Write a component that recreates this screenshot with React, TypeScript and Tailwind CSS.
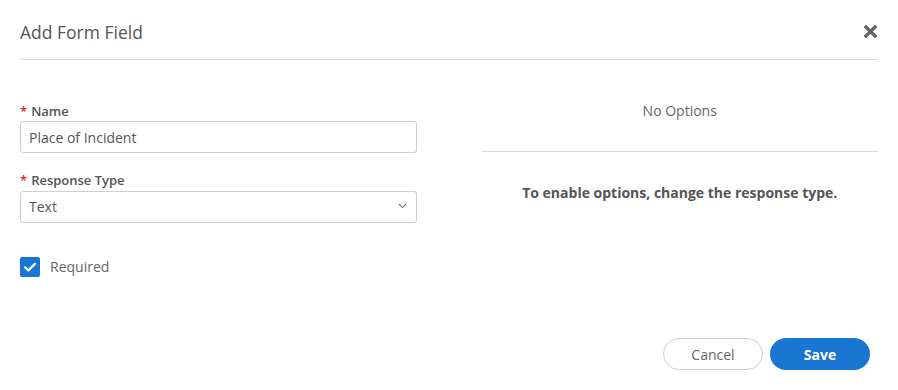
const CloseIcon = () => (
  <svg width="13" height="13" viewBox="0 0 13 13" aria-hidden="true">
    <path d="M2 2 L11 11 M11 2 L2 11" stroke="#666666" strokeWidth="3.4" strokeLinecap="square" fill="none" />
  </svg>
);

const Chevron = () => (
  <svg width="9" height="6" viewBox="0 0 9 6" aria-hidden="true">
    <path d="M0.8 1 L4.5 4.6 L8.2 1" stroke="#777777" strokeWidth="1.1" fill="none" />
  </svg>
);

const Check = () => (
  <svg width="20" height="20" viewBox="0 0 20 20" aria-hidden="true">
    <path d="M5 10.2 L8.4 13.4 L15 6.8" stroke="#ffffff" strokeWidth="2.2" fill="none" strokeLinecap="round" strokeLinejoin="round" />
  </svg>
);

const Label = ({ children }: { children: string }) => (
  <label className="block text-[13px] leading-[18px] font-semibold text-[#555]">
    <span className="text-[#e02424] mr-[4px]">*</span>
    {children}
  </label>
);

const App = () => {
  return (
    <div
      className="w-[898px] h-[390px] bg-white rounded-[3px] flex flex-col"
      style={{ fontFamily: '"Open Sans", "Liberation Sans", sans-serif' }}
    >
      {/* header */}
      <div className="mx-5 pt-5 pb-[15px] border-b border-[#d9d9d9] flex items-center justify-between">
        <h2 className="text-[17.5px] leading-6 text-[#555]">Add Form Field</h2>
        <button className="mr-[1px] mt-[-2px]">
          <CloseIcon />
        </button>
      </div>

      {/* body */}
      <div className="mx-5 pt-[42px] grid grid-cols-2 gap-[65px]">
        <div className="flex flex-col">
          <Label>Name</Label>
          <input
            readOnly
            value="Place of Incident"
            className="mt-px h-8 w-full border border-[#cfcfcf] rounded-[3px] px-2 text-[14px] text-[#555] outline-none"
          />
          <div className="mt-[18px]">
            <Label>Response Type</Label>
          </div>
          <div className="mt-[2px] h-8 w-full border border-[#cfcfcf] rounded-[3px] pl-2 pr-[9px] pb-[2px] flex items-center justify-between">
            <span className="text-[14px] text-[#555]">Text</span>
            <Chevron />
          </div>
          <div className="mt-[34px] flex items-center gap-[10px]">
            <span className="w-5 h-5 rounded-[2px] bg-[#1976d2] flex items-center justify-center">
              <Check />
            </span>
            <span className="text-[14px] text-[#666] -mt-px">Required</span>
          </div>
        </div>

        <div className="flex flex-col items-stretch text-center">
          <div className="-mt-px pb-[30px] border-b border-[#d9d9d9] text-[14px] leading-5 text-[#666]">
            No Options
          </div>
          <p className="mt-[31px] text-[14px] leading-5 font-bold text-[#555]">
            To enable options, change the response type.
          </p>
        </div>
      </div>

      {/* footer */}
      <div className="mt-auto pb-5 pr-[28px] flex justify-end gap-[7px]">
        <button className="w-[100px] h-8 rounded-full border border-[#cfcfcf] bg-white text-[14px] text-[#666]">
          Cancel
        </button>
        <button className="w-[100px] h-8 rounded-full bg-[#1976d2] text-[14px] font-bold text-white">
          Save
        </button>
      </div>
    </div>
  );
};

export default App;
